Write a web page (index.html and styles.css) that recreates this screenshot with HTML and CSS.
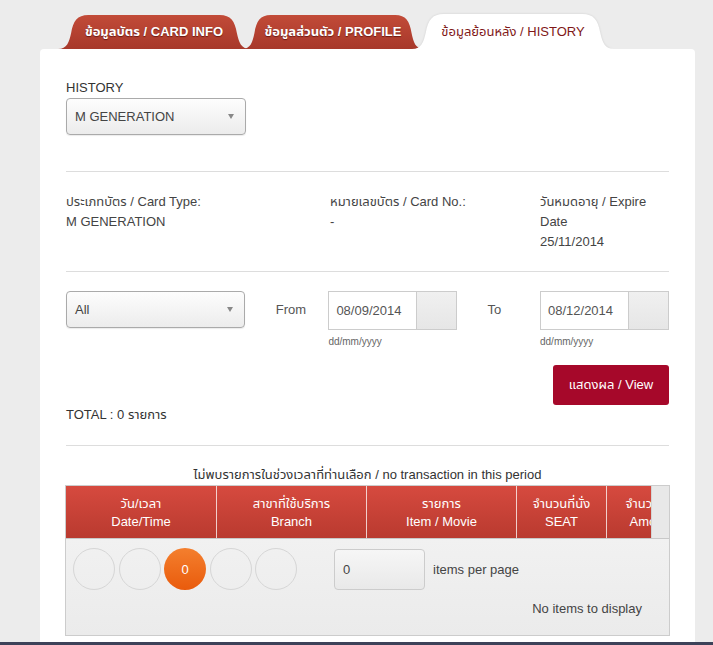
FILE: index.html
```html
<!DOCTYPE html>
<html lang="th">
<head>
    <meta charset="UTF-8">
    <meta name="viewport" content="width=device-width, initial-scale=1.0">
    <title>ข้อมูลย้อนหลัง / HISTORY</title>
    <link rel="stylesheet" href="styles.css">
</head>
<body>
    <div class="page">
        <nav class="tabs">
            <a class="tab tab-card">
                <svg class="tab-bg" viewBox="0 0 190 34" preserveAspectRatio="none">
                    <defs>
                        <linearGradient id="tabRed" x1="0" y1="0" x2="0" y2="1">
                            <stop offset="0" stop-color="#c24b38"/>
                            <stop offset="1" stop-color="#a7382a"/>
                        </linearGradient>
                    </defs>
                    <path d="M0,34 C9,34 11,27 13,18 C15,6 19,0 30,0 L160,0 C171,0 175,6 177,18 C179,27 181,34 190,34 Z" fill="url(#tabRed)"/>
                </svg>
                <span>ข้อมูลบัตร / CARD INFO</span>
            </a>
            <a class="tab tab-profile">
                <svg class="tab-bg" viewBox="0 0 190 34" preserveAspectRatio="none">
                    <path d="M0,34 C9,34 11,27 13,18 C15,6 19,0 30,0 L160,0 C171,0 175,6 177,18 C179,27 181,34 190,34 Z" fill="url(#tabRed)"/>
                </svg>
                <span>ข้อมูลส่วนตัว / PROFILE</span>
            </a>
            <a class="tab tab-history active">
                <svg class="tab-bg" viewBox="0 0 190 34" preserveAspectRatio="none">
                    <path d="M0,34 C9,34 11,27 13,18 C15,6 19,0 30,0 L160,0 C171,0 175,6 177,18 C179,27 181,34 190,34 Z" fill="#ffffff"/>
                </svg>
                <span>ข้อมูลย้อนหลัง / HISTORY</span>
            </a>
        </nav>

        <section class="panel">
            <div class="history-pick">
                <label class="field-label">HISTORY</label>
                <div class="select select-history">
                    <span>M GENERATION</span>
                    <span class="caret"></span>
                </div>
            </div>

            <div class="card-info">
                <div class="info-col info-type">ประเภทบัตร / Card Type:<br>M GENERATION</div>
                <div class="info-col info-no">หมายเลขบัตร / Card No.:<br>-</div>
                <div class="info-col info-exp">วันหมดอายุ / Expire Date<br>25/11/2014</div>
            </div>

            <div class="filters">
                <div class="select select-type">
                    <span>All</span>
                    <span class="caret"></span>
                </div>
                <span class="range-label">From</span>
                <div class="date-field">
                    <div class="date-box">
                        <span class="date-input">08/09/2014</span>
                        <span class="date-btn"></span>
                    </div>
                    <span class="date-hint">dd/mm/yyyy</span>
                </div>
                <span class="range-label">To</span>
                <div class="date-field">
                    <div class="date-box">
                        <span class="date-input">08/12/2014</span>
                        <span class="date-btn"></span>
                    </div>
                    <span class="date-hint">dd/mm/yyyy</span>
                </div>
            </div>

            <div class="actions">
                <button class="view-btn">แสดงผล / View</button>
            </div>
            <div class="total">TOTAL : 0 รายการ</div>

            <div class="results">
                <p class="empty-msg">ไม่พบรายการในช่วงเวลาที่ท่านเลือก / no transaction in this period</p>
                <div class="grid">
                    <div class="grid-head">
                        <div class="cols">
                            <div class="th th-date">วัน/เวลา<br>Date/Time</div>
                            <div class="th th-branch">สาขาที่ใช้บริการ<br>Branch</div>
                            <div class="th th-item">รายการ<br>Item / Movie</div>
                            <div class="th th-seat">จำนวนที่นั่ง<br>SEAT</div>
                            <div class="th th-amount">จำนวนเงิน<br>Amount</div>
                        </div>
                        <div class="gutter"></div>
                    </div>
                    <div class="pager">
                        <div class="pager-row">
                            <div class="pages">
                                <span class="page-dot"></span>
                                <span class="page-dot"></span>
                                <span class="page-dot current">0</span>
                                <span class="page-dot"></span>
                                <span class="page-dot"></span>
                            </div>
                            <span class="per-input">0</span>
                            <span class="per-label">items per page</span>
                        </div>
                        <div class="pager-info">No items to display</div>
                    </div>
                </div>
            </div>
        </section>
    </div>
    <div class="window-edge"></div>
</body>
</html>
```

FILE: styles.css
```css
body {
    font-family: "Liberation Sans", "Noto Sans Thai", "Noto Sans", sans-serif;
    margin: 0;
    padding: 0;
    background: #ececec;
    color: #444;
    font-size: 13px;
}

.page {
    padding-top: 15px;
}

/* tabs */
.tabs {
    display: flex;
    height: 34px;
    padding-left: 58px;
}

.tab {
    position: relative;
    z-index: 1;
    height: 34px;
    display: flex;
    align-items: center;
    justify-content: center;
    font-weight: bold;
    color: #fff;
    text-shadow: 0 1px 1px rgba(60, 0, 0, 0.6);
    cursor: pointer;
}

.tab span {
    position: relative;
    z-index: 1;
}

.tab-bg {
    position: absolute;
    left: 0;
    top: 0;
    width: 100%;
    height: 100%;
}

.tab-card {
    width: 192px;
}

.tab-profile {
    width: 182px;
    margin-left: -8px;
    z-index: 2;
}

.tab-history {
    width: 202px;
    margin-left: -12px;
    z-index: 3;
    top: -1px;
    height: 35px;
}

.tab.active {
    color: #7f1818;
    font-weight: normal;
    text-shadow: none;
}

.tab.active .tab-bg {
    filter: drop-shadow(0 0 1px rgba(0, 0, 0, 0.12));
}

/* panel */
.panel {
    position: relative;
    z-index: 4;
    margin-left: 40px;
    width: 655px;
    box-sizing: border-box;
    background: #fff;
    border-radius: 4px 4px 0 0;
    padding: 30px 26px 20px;
}

.field-label {
    display: block;
    line-height: 18px;
    color: #333;
}

.select {
    box-sizing: border-box;
    width: 180px;
    height: 37px;
    border: 1px solid #aaa;
    border-radius: 4px;
    background: linear-gradient(#fdfdfd, #ececec);
    box-shadow: 0 1px 1px rgba(0, 0, 0, 0.08);
    display: flex;
    align-items: center;
    justify-content: space-between;
    padding: 0 11px 0 8px;
    color: #444;
}

.select-history {
    margin-top: 1px;
}

.caret {
    width: 0;
    height: 0;
    border-left: 3px solid transparent;
    border-right: 3px solid transparent;
    border-top: 5px solid #888;
}

.history-pick {
    padding-bottom: 36px;
}

.card-info {
    display: flex;
    border-top: 1px solid #ddd;
    padding: 20px 0 19px;
    line-height: 20px;
}

.info-type {
    width: 264px;
}

.info-no {
    width: 210px;
}

.info-exp {
    width: 122px;
}

.filters {
    display: flex;
    align-items: flex-start;
    border-top: 1px solid #ddd;
    padding-top: 19px;
}

.range-label {
    box-sizing: border-box;
    width: 84px;
    padding-left: 31px;
    line-height: 38px;
    color: #555;
}

.range-label + .date-field + .range-label {
    width: 83px;
    padding-left: 30px;
}

.date-box {
    display: flex;
    height: 39px;
    border: 1px solid #ccc;
    box-sizing: border-box;
    width: 129px;
}

.date-input {
    width: 88px;
    box-sizing: border-box;
    padding-left: 7px;
    line-height: 37px;
    background: #fff;
    border-right: 1px solid #ccc;
    color: #555;
}

.date-btn {
    flex: 1;
    background: linear-gradient(#f0f0f0, #e6e6e6);
}

.date-hint {
    display: block;
    margin-top: 5px;
    font-size: 10px;
    line-height: 14px;
    color: #666;
}

.actions {
    display: flex;
    justify-content: flex-end;
    margin-top: 16px;
}

.view-btn {
    width: 116px;
    height: 40px;
    border: none;
    border-radius: 3px;
    background: #a6082a;
    color: #fff;
    font-family: inherit;
    font-size: 13px;
    cursor: pointer;
}

.total {
    line-height: 18px;
    margin-top: 1px;
    padding-bottom: 21px;
    color: #333;
}

.results {
    border-top: 1px solid #ddd;
    padding-top: 20px;
}

.empty-msg {
    margin: 0 0 1px;
    text-align: center;
    line-height: 18px;
    color: #333;
}

.grid {
    box-sizing: border-box;
    margin-left: -1px;
    width: 605px;
    border: 1px solid #ccc;
}

.grid-head {
    display: flex;
    height: 53px;
    box-sizing: border-box;
    border-bottom: 1px solid #c8c8c8;
}

.cols {
    display: flex;
    width: 585px;
    overflow: hidden;
    background: linear-gradient(#d64a3f, #b93a2f);
}

.th {
    flex: none;
    box-sizing: border-box;
    border-right: 1px solid rgba(255, 255, 255, 0.75);
    color: #fff;
    text-align: center;
    line-height: 18px;
    padding-top: 9px;
}

.th-date {
    width: 151px;
}

.th-branch,
.th-item {
    width: 150px;
}

.th-seat {
    width: 90px;
}

.th-amount {
    width: 90px;
    border-right: none;
}

.gutter {
    flex: 1;
    background: #e8e8e8;
    border-left: 1px solid #d4d4d4;
}

.pager {
    background: linear-gradient(#f1f1f1, #ebebeb);
    padding: 9px 27px 17px 7px;
}

.pager-row {
    display: flex;
    align-items: center;
}

.pages {
    display: flex;
    gap: 3.5px;
}

.page-dot {
    box-sizing: border-box;
    width: 42px;
    height: 42px;
    border-radius: 50%;
    border: 1px solid #d6d6d6;
    display: flex;
    align-items: center;
    justify-content: center;
    color: #fff;
}

.page-dot.current {
    border: none;
    background: linear-gradient(#f47f2e, #e95b0c);
}

.per-input {
    box-sizing: border-box;
    width: 91px;
    height: 41px;
    margin-left: 37px;
    border: 1px solid #ccc;
    border-radius: 4px;
    background: linear-gradient(#f6f6f6, #e9e9e9);
    padding-left: 8px;
    line-height: 39px;
    color: #444;
}

.per-label {
    margin-left: 8px;
    color: #444;
}

.pager-info {
    text-align: right;
    margin-top: 10px;
    line-height: 18px;
    color: #444;
}

.window-edge {
    position: fixed;
    left: 0;
    right: 0;
    bottom: 0;
    height: 3px;
    background: #3d4259;
    z-index: 10;
}
```
